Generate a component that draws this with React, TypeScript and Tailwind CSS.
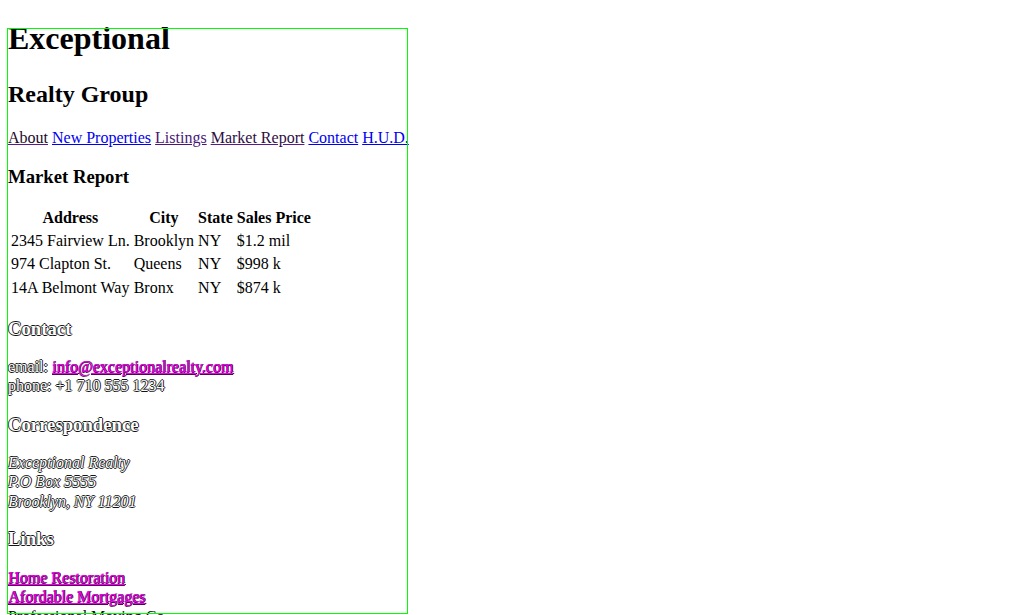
import React from "react";

const outline =
  "text-white [text-shadow:-1px_0_#0c3a12,1px_0_#3a0c3a,0_1px_#141414,0_-1px_#141414]";
const magenta =
  "text-[#f000f0] [text-shadow:1px_0_#3a003a,0_1px_#5a005a] underline decoration-[#f000f0]";

export default function App() {
  return (
    <div className="relative w-[1024px] h-[615px] overflow-hidden bg-white text-black font-['Liberation_Serif','Times_New_Roman',serif]">
      <div className="flex flex-col items-start px-[8px]">
        <h1 className="shrink-0 mt-[20px] text-[32px] leading-[37px] font-bold">
          Exceptional
        </h1>
        <h2 className="shrink-0 mt-[22.6px] text-[24px] leading-[28px] font-bold">
          Realty Group
        </h2>
        <nav className="shrink-0 mt-[21.3px] text-[16px] leading-[18px] whitespace-nowrap">
          <a className="text-[#1a0828] underline decoration-[#551a8b]">About</a>{" "}
          <a className="text-[#0000ee] underline">New Properties</a>{" "}
          <a className="text-[#4a1678] underline">Listings</a>{" "}
          <a className="text-[#2e0c44] underline decoration-[#551a8b]">Market Report</a>{" "}
          <a className="text-[#0000ee] underline">Contact</a>{" "}
          <a className="text-[#0000ee] underline">H.U.D.</a>
        </nav>
        <h3 className="shrink-0 mt-[19.1px] text-[18.72px] leading-[22px] font-bold">
          Market Report
        </h3>
        <table className="shrink-0 mt-[16.6px] border-separate border-spacing-[2px] text-[16px] leading-[19.33px]">
          <thead>
            <tr>
              <th className="p-[1px] font-bold text-center">Address</th>
              <th className="p-[1px] font-bold text-center">City</th>
              <th className="p-[1px] font-bold text-center">State</th>
              <th className="p-[1px] font-bold text-center">Sales Price</th>
            </tr>
          </thead>
          <tbody>
            <tr>
              <td className="p-[1px]">2345 Fairview Ln.</td>
              <td className="p-[1px]">Brooklyn</td>
              <td className="p-[1px]">NY</td>
              <td className="p-[1px]">$1.2 mil</td>
            </tr>
            <tr>
              <td className="p-[1px]">974 Clapton St.</td>
              <td className="p-[1px]">Queens</td>
              <td className="p-[1px]">NY</td>
              <td className="p-[1px]">$998 k</td>
            </tr>
            <tr>
              <td className="p-[1px]">14A Belmont Way</td>
              <td className="p-[1px]">Bronx</td>
              <td className="p-[1px]">NY</td>
              <td className="p-[1px]">$874 k</td>
            </tr>
          </tbody>
        </table>
        <h3 className={`shrink-0 mt-[17.8px] text-[18.72px] leading-[22px] font-bold ${outline}`}>
          Contact
        </h3>
        <p className="shrink-0 mt-[16.9px] text-[16px] leading-[19.3px] whitespace-nowrap">
          <span className={outline}>email:</span>{" "}
          <a className={magenta}>info@exceptionalrealty.com</a>
          <br />
          <span className={outline}>phone: +1 710 555 1234</span>
        </p>
        <h3 className={`shrink-0 mt-[18.5px] text-[18.72px] leading-[22px] font-bold ${outline}`}>
          Correspondence
        </h3>
        <p className={`shrink-0 mt-[17.5px] text-[16px] leading-[19.3px] italic whitespace-nowrap ${outline}`}>
          Exceptional Realty
          <br />
          P.O Box 5555
          <br />
          Brooklyn, NY 11201
        </p>
        <h3 className={`shrink-0 mt-[16.6px] text-[18.72px] leading-[22px] font-bold ${outline}`}>
          Links
        </h3>
        <p className="shrink-0 mt-[17.9px] text-[16px] leading-[19.8px] whitespace-nowrap">
          <a className={magenta}>Home Restoration</a>
          <br />
          <a className={magenta}>Afordable Mortgages</a>
          <br />
          <a className="text-[#1a001a] underline">Professional Moving Co.</a>
        </p>
      </div>
      <div className="pointer-events-none absolute left-[7px] top-[28px] w-[401px] h-[586px] border border-[#00ff00]" />
    </div>
  );
}
